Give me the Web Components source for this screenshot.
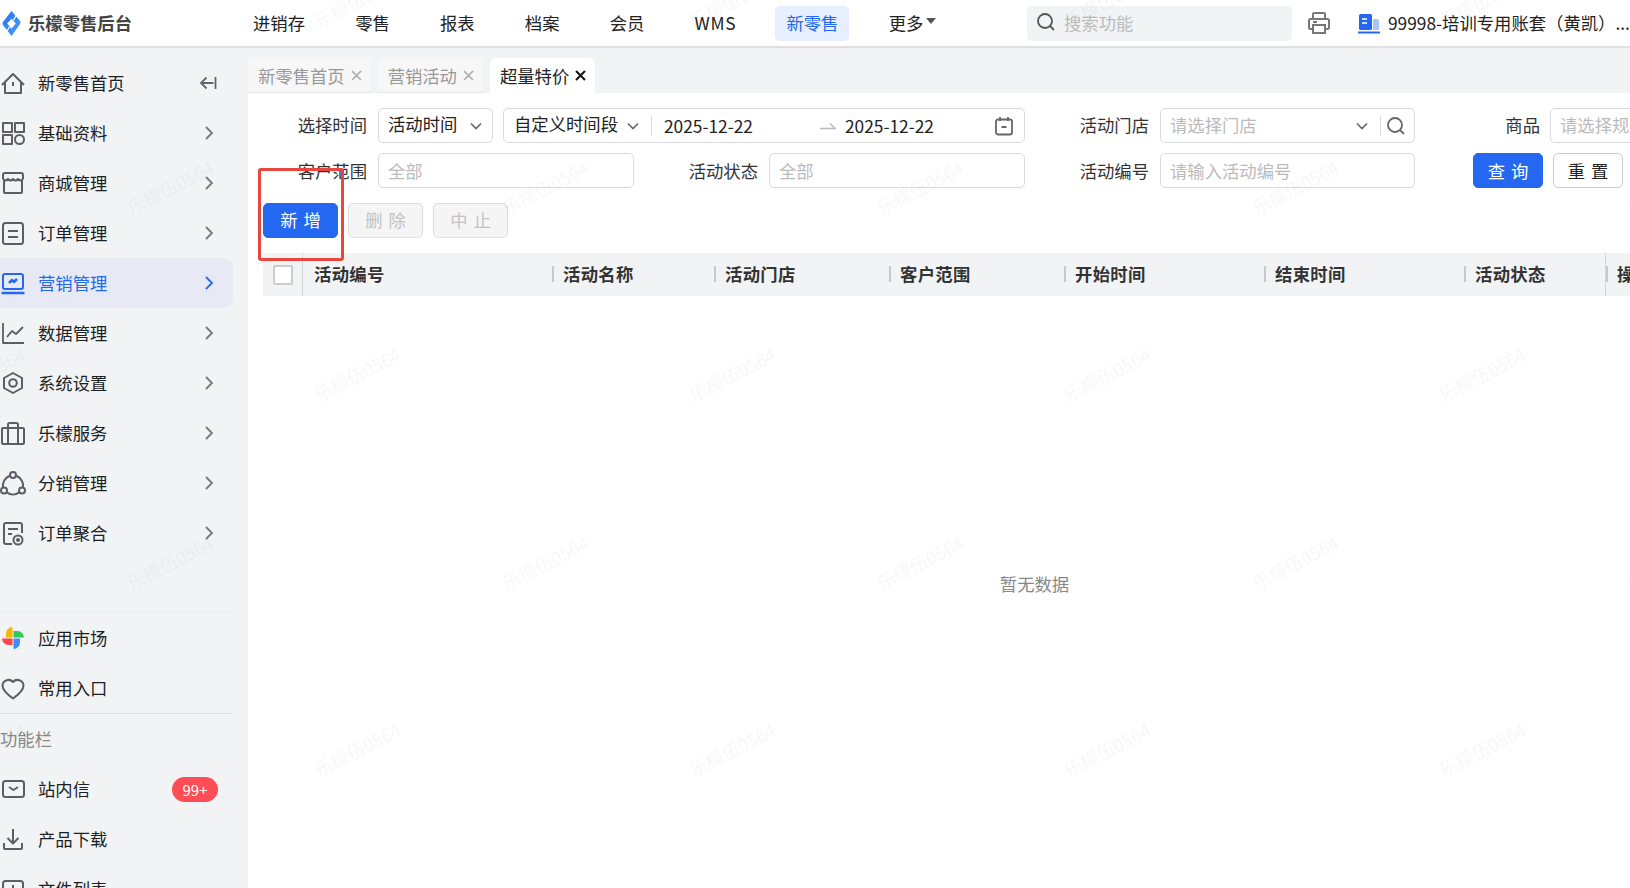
<!DOCTYPE html>
<html lang="zh">
<head>
<meta charset="utf-8">
<title>乐檬零售后台</title>
<style>
    html, body { margin: 0; height: 100%; overflow: hidden; background: #fff; }
    body { font: 17.33px "Noto Sans CJK SC", "Noto Sans", sans-serif; color: #222; }
    #page { display: flex; flex-direction: column; width: 1630px; height: 888px; overflow: hidden; }
    #body { display: flex; flex: 1; min-height: 0; }
</style>
</head>
<body>
<div id="page">
    <lk-header></lk-header>
    <div id="body">
        <lk-sidebar>
            <side-item icon="home" kind="collapse">新零售首页</side-item>
            <side-item icon="grid">基础资料</side-item>
            <side-item icon="store">商城管理</side-item>
            <side-item icon="order">订单管理</side-item>
            <side-item icon="market" active>营销管理</side-item>
            <side-item icon="data">数据管理</side-item>
            <side-item icon="gear">系统设置</side-item>
            <side-item icon="bag">乐檬服务</side-item>
            <side-item icon="share">分销管理</side-item>
            <side-item icon="merge">订单聚合</side-item>
            <side-item slot="apps" icon="apps" kind="none">应用市场</side-item>
            <side-item slot="apps" icon="heart" kind="none">常用入口</side-item>
            <side-item slot="tools" icon="mail" kind="none" badge="99+">站内信</side-item>
            <side-item slot="tools" icon="down" kind="none">产品下载</side-item>
            <side-item slot="tools" icon="file" kind="none">文件列表</side-item>
        </lk-sidebar>
        <lk-main>
            <lk-tabs>
                <tab-item>新零售首页</tab-item>
                <tab-item>营销活动</tab-item>
                <tab-item active>超量特价</tab-item>
            </lk-tabs>
            <lk-filter></lk-filter>
            <lk-toolbar></lk-toolbar>
            <lk-table></lk-table>
        </lk-main>
    </div>
</div>
<lk-watermark></lk-watermark>

<script>
const ICONS = {
    home: '<path d="M2 15 13 4l11 11M5 12.500V23h16V12.500M13 12v4"/>',
    grid: '<rect x="3" y="3" width="9" height="9"/><rect x="15" y="3" width="9" height="9"/><rect x="3" y="15" width="9" height="9"/><circle cx="19.500" cy="19.500" r="4.500"/>',
    store: '<path d="M3 9V5a2 2 0 0 1 2-2h16a2 2 0 0 1 2 2v4M4 9v13a1 1 0 0 0 1 1h16a1 1 0 0 0 1-1V9M3 9q2.500 3 5 0 2.500 3 5 0 2.500 3 5 0 2.500 3 5 0"/>',
    order: '<rect x="3" y="3" width="20" height="21" rx="2.500"/><path d="M8 11h10M8 17h10"/>',
    market: '<rect x="3" y="4" width="20" height="15" rx="2"/><path d="M1.500 23h23M9 13l3-3 2 2 3-3" stroke-width="2.500"/>',
    data: '<path d="M3 3v20h21M7 17l5-6 4 3 7-7" stroke-width="1.800"/>',
    gear: '<path d="M13 3l9 5v10l-9 5-9-5V8z"/><circle cx="13" cy="13" r="3.800"/>',
    bag: '<rect x="2" y="8" width="22" height="16" rx="1"/><path d="M8 24V4.500a1.500 1.500 0 0 1 1.500-1.500h7a1.500 1.500 0 0 1 1.500 1.500V24"/>',
    share: '<circle cx="13" cy="5" r="3"/><circle cx="4" cy="20.500" r="3"/><circle cx="22" cy="20.500" r="3"/><path d="M9.800 5.800A10.500 10.500 0 0 0 3 17.500M16.200 5.800A10.500 10.500 0 0 1 23 17.500M6.800 22.400a10.500 10.500 0 0 0 12.400 0"/>',
    merge: '<path d="M12 24H6a2 2 0 0 1-2-2V5a2 2 0 0 1 2-2h14a2 2 0 0 1 2 2v8M8 9h10M8 14h4"/><circle cx="18" cy="20" r="4.500"/><circle cx="18" cy="20" r="1" fill="#5c5d66"/>',
    heart: '<path d="M13 23.500C6 18.500 2.500 15 2.500 10.500A6 6 0 0 1 13 7a6 6 0 0 1 10.500 3.500C23.500 15 20 18.500 13 23.500z"/>',
    mail: '<rect x="3" y="5" width="21" height="16" rx="2.500"/><path d="M9 11l4.500 3 4.500-3"/>',
    down: '<path d="M13 3v14M7.500 12l5.500 5.500 5.500-5.500M4 17v5a1 1 0 0 0 1 1h16a1 1 0 0 0 1-1v-5"/>',
    file: '<rect x="3" y="5" width="20" height="19" rx="2.500"/><path d="M13 9v4"/>',
    apps: '<path stroke="none" fill="#f9b800" d="M12.500 12.500V2A6.500 6.500 0 0 0 6 8.500v4z"/><path stroke="none" fill="#34c759" d="M13.500 12.500H24A6.500 6.500 0 0 0 17.500 6h-4z"/><path stroke="none" fill="#3d8bfd" d="M13.500 13.500V24A6.500 6.500 0 0 0 20 17.500v-4z"/><path stroke="none" fill="#ff4747" d="M12.500 13.500H2A6.500 6.500 0 0 0 8.500 20h4z"/>'
};
const CHEVRON_DOWN = '<svg width="14" height="14" viewBox="0 0 14 14" fill="none" stroke="#666" stroke-width="1.600"><path d="M2 4.500 7 9.500l5-5"/></svg>';
const SEARCH = '<svg width="20" height="20" viewBox="0 0 20 20" fill="none" stroke="#666" stroke-width="1.800"><circle cx="9" cy="9" r="7"/><path d="M14 14l4 4"/></svg>';

class LkHeader extends HTMLElement {
    constructor() {
        super();
        this.attachShadow({ mode: 'open' });
        const items = ['进销存', '零售', '报表', '档案', '会员'];
        this.shadowRoot.innerHTML = `
        <style>
            :host { display: flex; align-items: center; height: 46px; flex: none; background: #fff; border-bottom: 2px solid #dfe0e2; }
            .logo { display: flex; align-items: center; width: 242px; flex: none; padding-left: 2px; box-sizing: border-box; gap: 7px; font-weight: 700; color: #444; }
            .logo span { padding-bottom: 2px; }
            nav { display: flex; align-items: center; gap: 28.2px; width: 785px; flex: none; }
            nav a { display: flex; align-items: center; height: 35px; padding: 0 11px 2px; box-sizing: border-box; border-radius: 5px; }
            nav a.on { background: #e7eefd; color: #2468f2; }
            nav a.wms { letter-spacing: 0.7px; }
            .caret { width: 0; height: 0; margin: 0 0 2px 3px; border: 5px solid transparent; border-top: 6px solid #555; border-bottom: 0; }
            .search { display: flex; align-items: center; gap: 8px; width: 265px; height: 35px; padding: 0 0 2px 9px; box-sizing: border-box; background: #f2f3f5; border-radius: 5px; color: #bbb; flex: none; }
            .print { display: flex; margin-left: 15px; flex: none; }
            .corp { display: flex; margin-left: 27px; flex: none; }
            .account { margin-left: 8px; padding-bottom: 2px; white-space: nowrap; }
        </style>
        <div class="logo">
            <svg width="19" height="25" viewBox="0 0 20 24" preserveAspectRatio="none">
                <defs><linearGradient id="lg" x1="0" y1="0" x2="1" y2="1"><stop offset="0" stop-color="#1f6ff0"/><stop offset="1" stop-color="#4aa3fb"/></linearGradient></defs>
                <path fill="url(#lg)" fill-rule="evenodd" d="M10 0 19 9.500Q20 11 19 12.500L10 24 1 13.500Q0 12 1 10.500ZM10 7.500 5.500 12 10 17 14.500 12Z"/>
                <path d="M12 9 15.500 3.500M8 15 4.500 20.500" stroke="#fff" stroke-width="1.200"/>
            </svg>
            <span>乐檬零售后台</span>
        </div>
        <nav>
            ${items.map(i => `<a>${i}</a>`).join('')}
            <a class="wms">WMS</a>
            <a class="on">新零售</a>
            <a>更多<span class="caret"></span></a>
        </nav>
        <div class="search">${SEARCH.replace(/#666/g, '#555')}<span>搜索功能</span></div>
        <div class="print"><svg width="24" height="24" viewBox="0 0 24 24" fill="none" stroke="#777" stroke-width="2"><path d="M6 8V3a1 1 0 0 1 1-1h10a1 1 0 0 1 1 1v5M6 18H3.500A1.500 1.500 0 0 1 2 16.500V9.500A1.500 1.500 0 0 1 3.500 8h17A1.500 1.500 0 0 1 22 9.500v7a1.500 1.500 0 0 1-1.500 1.500H18"/><path d="M6 14h12v8H6zM6 11h4"/></svg></div>
        <div class="corp"><svg width="22" height="22" viewBox="0 0 22 22"><rect x="1" y="2" width="13" height="16" rx="1.500" fill="#2468f2"/><path d="M4 7h5M4 11h5" stroke="#fff" stroke-width="1.600"/><path d="M15 7h4a2 2 0 0 1 2 2v9h-6z" fill="#a9c5fa"/><path d="M0 20.500h22" stroke="#2468f2" stroke-width="2"/></svg></div>
        <div class="account">99998-培训专用账套（黄凯）...</div>`;
    }
}

class LkSidebar extends HTMLElement {
    constructor() {
        super();
        this.attachShadow({ mode: 'open' });
        this.shadowRoot.innerHTML = `
        <style>
            :host { display: block; width: 248px; flex: none; background: #f2f3f5; padding-top: 10px; box-sizing: border-box; overflow: hidden; }
            .apps { margin-top: 54px; border-top: 1px solid #eaebee; width: 233px; }
            .apps-in { border-bottom: 1px solid #dcdde0; }
            .title { display: flex; align-items: center; height: 50px; padding-bottom: 1px; box-sizing: border-box; color: #888; }
        </style>
        <slot></slot>
        <div class="apps"><div class="apps-in"><slot name="apps"></slot></div></div>
        <div class="title">功能栏</div>
        <slot name="tools"></slot>`;
    }
}

class SideItem extends HTMLElement {
    constructor() {
        super();
        this.attachShadow({ mode: 'open' });
    }

    connectedCallback() {
        const icon = this.getAttribute('icon');
        const kind = this.getAttribute('kind') || 'arrow';
        const active = this.hasAttribute('active');
        const badge = this.getAttribute('badge');
        const color = active ? '#2468f2' : '#5c5d66';
        let right = '';
        if (kind === 'arrow') {
            right = `<svg class="end" width="16" height="16" viewBox="0 0 16 16" fill="none" stroke="${active ? '#2468f2' : '#777'}" stroke-width="1.800"><path d="M5 2l6 6-6 6"/></svg>`;
        } else if (kind === 'collapse') {
            right = `<svg class="end wide" width="18" height="16" viewBox="0 0 18 16" fill="none" stroke="#666" stroke-width="1.800"><path d="M7.500 2.500 2 8l5.500 5.500M2 8h12.500M16.500 2v12"/></svg>`;
        }
        this.shadowRoot.innerHTML = `
        <style>
            :host { display: flex; align-items: center; height: 50px; width: 233px; box-sizing: border-box; border-radius: 0 10px 10px 0; gap: 12px; color: ${active ? '#2468f2' : '#1c1f24'}; ${active ? 'background: #e7eaf5;' : ''} }
            .icon { display: block; flex: none; }
            .txt { flex: 1; white-space: nowrap; padding-bottom: 2px; }
            .end { margin-right: 16px; flex: none; }
            .wide { margin-right: 16px; }
            .badge { display: flex; align-items: center; justify-content: center; width: 46px; height: 25px; margin-right: 15px; border-radius: 13px; background: #ff4d55; color: #fff; font-size: 15px; }
        </style>
        <svg class="icon" width="26" height="26" viewBox="0 0 26 26" fill="none" stroke="${color}" stroke-width="2" stroke-linejoin="round">${ICONS[icon]}</svg>
        <span class="txt"><slot></slot></span>
        ${right}
        ${badge ? `<span class="badge">${badge}</span>` : ''}`;
    }
}

class LkMain extends HTMLElement {
    constructor() {
        super();
        this.attachShadow({ mode: 'open' });
        this.shadowRoot.innerHTML = `
        <style>
            :host { display: block; flex: 1; min-width: 0; overflow: hidden; background: #fff; }
        </style>
        <slot></slot>`;
    }
}

class LkTabs extends HTMLElement {
    constructor() {
        super();
        this.attachShadow({ mode: 'open' });
        this.shadowRoot.innerHTML = `
        <style>
            :host { display: flex; align-items: flex-end; gap: 7px; height: 45px; background: #f2f3f5; }
        </style>
        <slot></slot>`;
    }
}

class TabItem extends HTMLElement {
    constructor() {
        super();
        this.attachShadow({ mode: 'open' });
        const active = this.hasAttribute('active');
        this.shadowRoot.innerHTML = `
        <style>
            :host { display: flex; align-items: center; gap: 5px; height: 35px; padding: 0 8px 0 10px; box-sizing: border-box; border-radius: 6px 6px 0 0; white-space: nowrap; background: ${active ? '#fff' : '#f7f7f8'}; color: ${active ? '#222' : '#999'}; ${active ? '' : 'border-bottom: 1px solid #e4e5e7;'} }
            svg { display: block; }
        </style>
        <slot></slot>
        <svg width="13" height="13" viewBox="0 0 13 13" fill="none" stroke="${active ? '#111' : '#aaa'}" stroke-width="${active ? 2 : 1.600}"><path d="M2 2l9 9M11 2l-9 9"/></svg>`;
    }
}

class LkSelect extends HTMLElement {
    constructor() {
        super();
        this.attachShadow({ mode: 'open' });
        this.shadowRoot.innerHTML = `
        <style>
            :host { display: flex; align-items: center; height: 35px; box-sizing: border-box; padding: 0 9px; border: 1px solid #d9dadc; border-radius: 5px; background: #fff; white-space: nowrap; overflow: hidden; color: #222; }
            :host([empty]) { color: #bbb; }
            span { flex: 1; padding-bottom: var(--lift, 0); }
            svg { flex: none; display: block; }
            .extra { display: flex; align-items: center; }
        </style>
        <span><slot></slot></span>
        ${this.hasAttribute('plain') ? '' : CHEVRON_DOWN}
        <div class="extra"><slot name="extra"></slot></div>`;
    }
}

class LkDate extends HTMLElement {
    constructor() {
        super();
        this.attachShadow({ mode: 'open' });
        this.shadowRoot.innerHTML = `
        <style>
            :host { display: flex; align-items: center; flex: 1; height: 35px; box-sizing: border-box; padding-left: 10px; border: 1px solid #d9dadc; border-radius: 5px; white-space: nowrap; color: #222; }
            .type { width: 103px; flex: none; padding-bottom: 4px; }
            .sep { width: 1px; height: 20px; margin: 0 12px 0 11px; background: #d9dadc; flex: none; }
            .chev { display: flex; margin-left: 9px; }
            .from { width: 156px; flex: none; }
            .arrow { display: flex; width: 25px; flex: none; }
            svg { display: block; }
            .cal { margin-left: 61px; flex: none; }
        </style>
        <span class="type">自定义时间段</span>
        <span class="chev">${CHEVRON_DOWN}</span>
        <span class="sep"></span>
        <span class="from">2025-12-22</span>
        <span class="arrow"><svg width="16" height="8" viewBox="0 0 16 8" fill="none" stroke="#bbb" stroke-width="1.500"><path d="M0 6.500h15L10 1.500"/></svg></span>
        <span>2025-12-22</span>
        <svg class="cal" width="18" height="20" viewBox="0 0 18 20" fill="none" stroke="#666" stroke-width="1.800"><rect x="1" y="3.500" width="16" height="15" rx="2"/><path d="M5 1v4M13 1v4M6.500 11h5"/></svg>`;
    }
}

class LkButton extends HTMLElement {
    constructor() {
        super();
        this.attachShadow({ mode: 'open' });
        this.shadowRoot.innerHTML = `
        <style>
            :host { display: flex; align-items: center; justify-content: center; width: 75px; height: 35px; padding-bottom: var(--lift, 0); box-sizing: border-box; border-radius: 5px; border: 1px solid #ccc; white-space: pre; word-spacing: 2px; flex: none; color: #222; background: #fff; }
            :host([kind="primary"]) { background: #2468f2; border-color: #2468f2; color: #fff; }
            :host([kind="disabled"]) { background: #f5f5f5; border-color: #ddd; color: #c4c4c4; }
        </style>
        <slot></slot>`;
    }
}

class LkFilter extends HTMLElement {
    constructor() {
        super();
        this.attachShadow({ mode: 'open' });
        this.shadowRoot.innerHTML = `
        <style>
            :host { display: grid; grid-template-columns: 115px 256px 135px 256px 135px 255px 135px 300px; grid-auto-rows: 35px; row-gap: 10px; width: 1587px; padding: 15px 0 0 15px; box-sizing: content-box; align-items: center; }
            label { text-align: right; padding-right: 11px; color: #333; white-space: nowrap; }
            label.top { padding-bottom: 2px; }
            label.tight { padding-right: 10px; }
            .when { grid-column: 2 / 5; display: flex; gap: 10px; }
            .when lk-select { width: 115px; flex: none; box-sizing: border-box; --lift: 4px; }
            .store { --lift: 2px; }
            .btns { grid-column: 7 / 9; display: flex; gap: 10px; margin-left: 58px; }
            .btns lk-button { width: 70px; }
            .tool { display: flex; align-items: center; margin-right: -1px; }
            .tool i { width: 1px; height: 20px; background: #d9dadc; margin: 0 5px 0 11px; }
        </style>
        <label class="top">选择时间</label>
        <div class="when">
            <lk-select>活动时间</lk-select>
            <lk-date></lk-date>
        </div>
        <label class="top">活动门店</label>
        <lk-select class="store" empty>请选择门店
            <div slot="extra" class="tool"><i></i>${SEARCH}</div>
        </lk-select>
        <label class="top tight">商品</label>
        <lk-select class="store" empty plain>请选择规格</lk-select>

        <label>客户范围</label>
        <lk-select empty plain>全部</lk-select>
        <label>活动状态</label>
        <lk-select empty plain>全部</lk-select>
        <label>活动编号</label>
        <lk-select empty plain>请输入活动编号</lk-select>
        <div class="btns">
            <lk-button kind="primary">查 询</lk-button>
            <lk-button>重 置</lk-button>
        </div>`;
    }
}

class LkToolbar extends HTMLElement {
    constructor() {
        super();
        this.attachShadow({ mode: 'open' });
        this.shadowRoot.innerHTML = `
        <style>
            :host { display: flex; gap: 10px; position: relative; padding: 15px 0 0 15px; --lift: 2px; }
            .mark { position: absolute; left: 10px; top: -20px; width: 86px; height: 93px; box-sizing: border-box; border: 3px solid #e8473f; border-radius: 3px; pointer-events: none; }
        </style>
        <lk-button kind="primary">新 增</lk-button>
        <lk-button kind="disabled">删 除</lk-button>
        <lk-button kind="disabled">中 止</lk-button>
        <div class="mark"></div>`;
    }
}

class LkTable extends HTMLElement {
    constructor() {
        super();
        this.attachShadow({ mode: 'open' });
        const cols = [['活动编号', 249, 0], ['活动名称', 162, 1], ['活动门店', 175, 1], ['客户范围', 175, 1], ['开始时间', 200, 1], ['结束时间', 200, 1], ['活动状态', 141, 1], ['操作', 200, 2]];
        this.shadowRoot.innerHTML = `
        <style>
            :host { display: block; width: 1543px; margin: 15px 0 0 15px; }
            .head { display: flex; height: 43px; background: #f2f3f5; align-items: center; font-weight: 700; letter-spacing: 0.3px; color: #333; }
            .check { display: flex; align-items: center; justify-content: center; width: 39px; height: 43px; border-right: 1px solid #d5d6d9; box-sizing: content-box; flex: none; }
            .check i { display: block; width: 20px; height: 20px; box-sizing: border-box; background: #fff; border: 2px solid #ccc; border-radius: 2px; }
            .cell { position: relative; display: flex; align-items: center; height: 43px; padding: 0 0 2px 11px; box-sizing: border-box; flex: none; white-space: nowrap; }
            .cell:first-of-type { padding-left: 10px; }
            .bar::before { content: ""; position: absolute; left: 0; top: 13px; width: 2px; height: 16px; background: #c8c9cc; }
            .last { border-left: 1px solid #d5d6d9; }
            .empty { display: flex; align-items: center; justify-content: center; height: 576px; padding-bottom: 2px; box-sizing: border-box; color: #888; }
        </style>
        <div class="head">
            <div class="check"><i></i></div>
            ${cols.map(c => `<div class="cell ${c[2] ? 'bar' : ''} ${c[2] === 2 ? 'last' : ''}" style="width:${c[1]}px">${c[0]}</div>`).join('')}
        </div>
        <div class="empty">暂无数据</div>`;
    }
}

class LkWatermark extends HTMLElement {
    constructor() {
        super();
        this.attachShadow({ mode: 'open' });
        let marks = '';
        const rows = [[0, 357], [187, 170], [374, 357], [562, 170], [749, 357]];
        rows.forEach(r => {
            for (let x = r[1] - 375; x < 1700; x += 375) {
                marks += `<span style="left:${x}px;top:${r[0]}px">乐檬伍0564</span>`;
            }
        });
        this.shadowRoot.innerHTML = `
        <style>
            :host { position: fixed; inset: 0; overflow: hidden; pointer-events: none; z-index: 50; }
            span { position: absolute; transform: translate(-50%, -50%) rotate(-27deg); font-size: 18px; line-height: 1; white-space: nowrap; color: rgba(0, 0, 0, 0.035); }
        </style>
        ${marks}`;
    }
}

customElements.define('lk-header', LkHeader);
customElements.define('lk-sidebar', LkSidebar);
customElements.define('side-item', SideItem);
customElements.define('lk-main', LkMain);
customElements.define('lk-tabs', LkTabs);
customElements.define('tab-item', TabItem);
customElements.define('lk-select', LkSelect);
customElements.define('lk-date', LkDate);
customElements.define('lk-button', LkButton);
customElements.define('lk-filter', LkFilter);
customElements.define('lk-toolbar', LkToolbar);
customElements.define('lk-table', LkTable);
customElements.define('lk-watermark', LkWatermark);
</script>
</body>
</html>
